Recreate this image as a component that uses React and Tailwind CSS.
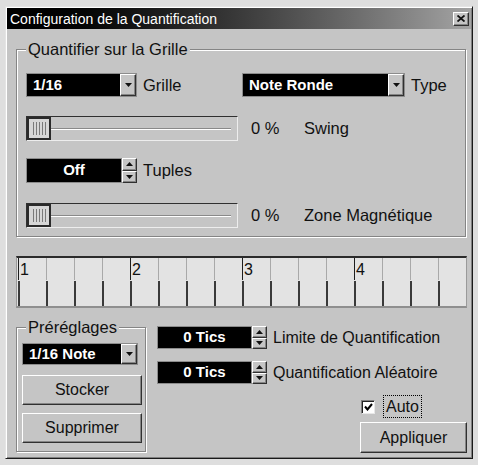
import React from "react"

const raised =
  "bg-[#c5c5c5] border border-t-white border-l-white border-b-[#303030] border-r-[#303030] shadow-[inset_-1px_-1px_0_#858585]"

function Arrow({ up }) {
  return (
    <svg width="7" height="4" viewBox="0 0 7 4">
      {up ? <polygon points="0,4 7,4 3.5,0" fill="#111" /> : <polygon points="0,0 7,0 3.5,4" fill="#111" />}
    </svg>
  )
}

function Dropdown({ label, className }) {
  return (
    <div className={`flex border border-[#8c8c8c] bg-black ${className}`}>
      <div className="flex-1 flex items-center pl-[6px] text-white font-bold text-[15px]">{label}</div>
      <div className={`w-[16px] flex items-center justify-center ${raised}`}>
        <Arrow />
      </div>
    </div>
  )
}

function SpinBox({ value, className }) {
  return (
    <div className={`flex ${className}`}>
      <div className="flex-1 flex items-center justify-center bg-black border border-[#8c8c8c] text-white font-bold text-[15px]">
        {value}
      </div>
      <div className="w-[15px] flex flex-col">
        <div className={`flex-1 flex items-center justify-center ${raised}`}>
          <Arrow up />
        </div>
        <div className={`flex-1 flex items-center justify-center ${raised}`}>
          <Arrow />
        </div>
      </div>
    </div>
  )
}

function Slider() {
  return (
    <div className="w-[212px] h-[25px] flex border border-t-[#303030] border-l-[#303030] border-b-[#ededed] border-r-[#ededed]">
      <div className="w-[24px] flex justify-center gap-[2px] py-[3px] bg-[#d6d6d6] border-2 border-[#2a2a2a]">
        <div className="w-px bg-[#7a7a7a]" />
        <div className="w-px bg-[#7a7a7a]" />
        <div className="w-px bg-[#7a7a7a]" />
        <div className="w-px bg-[#7a7a7a]" />
        <div className="w-px bg-[#7a7a7a]" />
      </div>
      <div className="flex-1 flex items-center pr-[6px]">
        <div className="w-full h-[2px] border-t border-t-[#8a8a8a] border-b border-b-white" />
      </div>
    </div>
  )
}

function Button({ label, className }) {
  return (
    <button className={`flex items-center justify-center text-[16px] text-[#111] ${raised} ${className}`}>{label}</button>
  )
}

const groupBox =
  "border border-[#858585] shadow-[inset_1px_1px_0_#fff,1px_1px_0_#fff]"

export default function App() {
  const ticks = Array.from({ length: 16 }, (_, i) => i)

  return (
    <div className="w-[478px] h-[465px] bg-[#dedede] pt-[6px] pl-[5px] font-['Liberation_Sans',Arial,sans-serif] text-[#111]">
      <div className="w-[468px] h-[453px] bg-[#c5c5c5] border border-t-[#e4e4e4] border-l-[#e4e4e4] border-b-[#1a1a1a] border-r-[#1a1a1a] p-px shadow-[inset_1px_1px_0_#fff,inset_-1px_-1px_0_#808080]">
        {/* title bar */}
        <div className="h-[21px] flex items-center justify-between bg-linear-to-r from-black via-[#3a3a3a] to-[#a4a4a4] pl-[3px] pr-[2px]">
          <span className="text-white text-[14px] leading-none">Configuration de la Quantification</span>
          <div className={`w-[16px] h-[14px] flex items-center justify-center ${raised}`}>
            <svg width="8" height="7" viewBox="0 0 8 7">
              <path d="M0.5 0.5 L7.5 6.5 M7.5 0.5 L0.5 6.5" stroke="#111" strokeWidth="1.8" />
            </svg>
          </div>
        </div>

        {/* Quantifier sur la Grille */}
        <fieldset className={`mt-[11px] ml-[9px] w-[450px] ${groupBox}`}>
          <legend className="ml-[9px] px-[2px] bg-[#c5c5c5] text-[16.5px] leading-[18px]">Quantifier sur la Grille</legend>
          <div className="pl-[9px] pb-[8px] text-[16.5px]">
            <div className="mt-[15px] h-[24px] flex items-center">
              <div className="w-[216px] h-full flex items-center">
                <Dropdown label="1/16" className="w-[111px] h-full" />
                <span className="ml-[6px]">Grille</span>
              </div>
              <Dropdown label="Note Ronde" className="w-[163px] h-full" />
              <span className="ml-[6px]">Type</span>
            </div>

            <div className="mt-[19px] flex items-center">
              <Slider />
              <span className="ml-[13px] w-[53px]">0 %</span>
              <span>Swing</span>
            </div>

            <div className="mt-[17px] h-[25px] flex items-center">
              <SpinBox value="Off" className="w-[111px] h-full" />
              <span className="ml-[6px]">Tuples</span>
            </div>

            <div className="mt-[20px] flex items-center">
              <Slider />
              <span className="ml-[13px] w-[53px]">0 %</span>
              <span>Zone Magnétique</span>
            </div>
          </div>
        </fieldset>

        {/* ruler */}
        <div className="mt-[19px] ml-[9px] w-[451px] h-[52px] flex pl-px bg-[#e3e3e3] border-t-2 border-t-[#2b2b2b] border-b-2 border-b-[#8f8f8f] border-l border-l-[#9a9a9a] border-r border-r-[#9a9a9a]">
          {ticks.map((i) => {
            const major = i % 4 === 0
            return (
              <div key={i} className="w-[28px] flex flex-col">
                <div
                  className={`h-[22px] pl-px pt-[3px] text-[16px] leading-[18px] border-l ${
                    major ? "border-l-[#1e1e1e]" : "border-l-[#a9a9a9]"
                  }`}
                >
                  {major ? i / 4 + 1 : ""}
                </div>
                <div className="flex-1 mt-px border-l-2 border-l-[#3a3a3a]" />
              </div>
            )
          })}
        </div>

        {/* bottom section */}
        <div className="ml-[9px] flex items-start text-[16px]">
          <fieldset className={`mt-[10px] w-[130px] ${groupBox}`}>
            <legend className="ml-[9px] px-[2px] bg-[#c5c5c5] text-[16.5px] leading-[18px]">Préréglages</legend>
            <div className="pl-[5px] pb-[8px]">
              <Dropdown label="1/16 Note" className="mt-[7px] w-[116px] h-[22px]" />
              <Button label="Stocker" className="mt-[10px] w-[120px] h-[30px]" />
              <Button label="Supprimer" className="mt-[8px] w-[120px] h-[30px]" />
            </div>
          </fieldset>

          <div className="ml-[11px] mt-[18px] flex flex-col">
            <div className="h-[23px] flex items-center">
              <SpinBox value="0 Tics" className="w-[110px] h-full" />
              <span className="ml-[6px]">Limite de Quantification</span>
            </div>
            <div className="mt-[12px] h-[23px] flex items-center">
              <SpinBox value="0 Tics" className="w-[110px] h-full" />
              <span className="ml-[6px]">Quantification Aléatoire</span>
            </div>
            <div className="mt-[11px] ml-[204px] h-[23px] flex items-center">
              <div className="w-[14px] h-[14px] flex items-center justify-center bg-white border border-t-[#808080] border-l-[#808080] border-b-[#e8e8e8] border-r-[#e8e8e8] shadow-[inset_1px_1px_0_#222]">
                <svg width="9" height="8" viewBox="0 0 9 8">
                  <path d="M1 3.5 L3.5 6.5 L8 1" fill="none" stroke="#000" strokeWidth="2" />
                </svg>
              </div>
              <div className="ml-[8px] h-full flex items-center px-[2px] border border-dotted border-black">Auto</div>
            </div>
            <Button label="Appliquer" className="mt-[4px] ml-[203px] w-[107px] h-[31px]" />
          </div>
        </div>
      </div>
    </div>
  )
}
